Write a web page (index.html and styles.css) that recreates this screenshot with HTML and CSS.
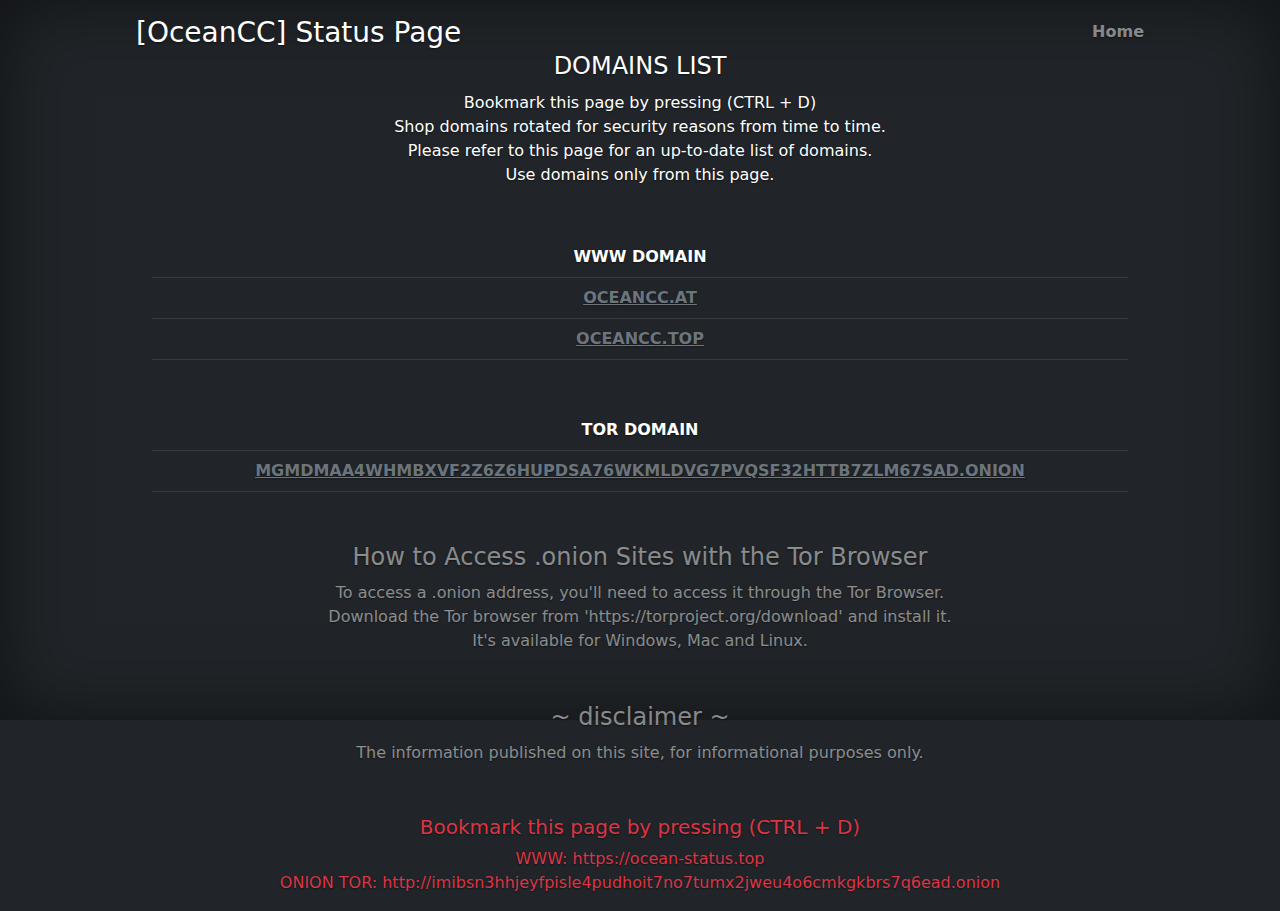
FILE: index.html
```html
<!DOCTYPE html>
<html lang="en">
<head>
<meta charset="utf-8">
<title>[OceanCC] Status Page</title>
<link rel="stylesheet" href="styles.css">
</head>
<body>
<div class="cover">
  <div class="container">
    <header class="masthead">
      <h3 class="brand">[OceanCC] Status Page</h3>
      <nav class="nav">
        <a class="nav-link" href="#">Home</a>
      </nav>
    </header>
    <main class="main">
      <h4 class="title first">DOMAINS LIST</h4>
      <p class="text">Bookmark this page by pressing (CTRL + D)<br>Shop domains rotated for security reasons from time to time.<br>Please refer to this page for an up-to-date list of domains.<br>Use domains only from this page.</p>

      <table class="table">
        <thead><tr><th>WWW DOMAIN</th></tr></thead>
        <tbody>
          <tr><td><a class="dlink" href="#">oceancc.at</a></td></tr>
          <tr><td><a class="dlink" href="#">oceancc.top</a></td></tr>
        </tbody>
      </table>

      <table class="table">
        <thead><tr><th>TOR DOMAIN</th></tr></thead>
        <tbody>
          <tr><td><a class="dlink" href="#">mgmdmaa4whmbxvf2z6z6hupdsa76wkmldvg7pvqsf32httb7zlm67sad.onion</a></td></tr>
        </tbody>
      </table>

      <h4 class="title muted section after-table">How to Access .onion Sites with the Tor Browser</h4>
      <p class="text muted">To access a .onion address, you'll need to access it through the Tor Browser.<br>Download the Tor browser from 'https://torproject.org/download' and install it.<br>It's available for Windows, Mac and Linux.</p>

      <h4 class="title muted section">~ disclaimer ~</h4>
      <p class="text muted">The information published on this site, for informational purposes only.</p>

      <h5 class="subtitle red section">Bookmark this page by pressing (CTRL + D)</h5>
      <p class="text red">WWW: https://ocean-status.top<br>ONION TOR: http://imibsn3hhjeyfpisle4pudhoit7no7tumx2jweu4o6cmkgkbrs7q6ead.onion</p>
    </main>
  </div>
</div>
</body>
</html>
```

FILE: styles.css
```css
html, body {
  margin: 0;
  padding: 0;
}
body {
  background: #212529;
  color: #fff;
  font-family: "DejaVu Sans", sans-serif;
  font-size: 16px;
  line-height: 1.5;
  text-align: center;
  text-shadow: 0 0.05rem 0.1rem rgba(0, 0, 0, 0.5);
}
.cover {
  position: relative;
  min-height: 911px;
}
.cover::before {
  content: "";
  position: absolute;
  top: 0;
  left: 0;
  right: 0;
  height: 720px;
  box-shadow: inset 0 0 5rem rgba(0, 0, 0, 0.5);
  pointer-events: none;
}
.container {
  position: relative;
  max-width: 1008px;
  margin: 0 auto;
  padding: 16px;
}
.masthead {
  display: flex;
  justify-content: space-between;
  align-items: flex-start;
}
.brand {
  margin: 0;
  font-size: 28px;
  font-weight: 400;
  line-height: 1.2;
}
.nav {
  display: flex;
}
.nav-link {
  padding: 4px 0;
  margin-left: 16px;
  font-weight: 700;
  color: rgba(255, 255, 255, 0.5);
  text-decoration: none;
}
.main {
  padding: 0 16px;
}
.title {
  margin: 0 0 9px;
  font-size: 24px;
  font-weight: 400;
  line-height: 1.2;
}
.title.first {
  margin: 2px 0 11px;
}
.subtitle {
  margin: 0 0 8px;
  font-size: 20px;
  font-weight: 400;
  line-height: 1.2;
}
.text {
  margin: 0 0 16px;
}
.section {
  margin-top: 50px;
}
.section.after-table {
  margin-top: 51px;
}
.muted {
  color: rgba(255, 255, 255, 0.5);
}
.red {
  color: #dc3545;
}
.table {
  width: 100%;
  border-collapse: collapse;
  margin: 50px 0 16px;
}
.table th,
.table td {
  padding: 8px;
  border-bottom: 1px solid #373b3e;
  text-align: center;
  font-weight: 700;
}
.dlink {
  color: #6c757d;
  text-transform: uppercase;
  font-weight: 700;
}
```
